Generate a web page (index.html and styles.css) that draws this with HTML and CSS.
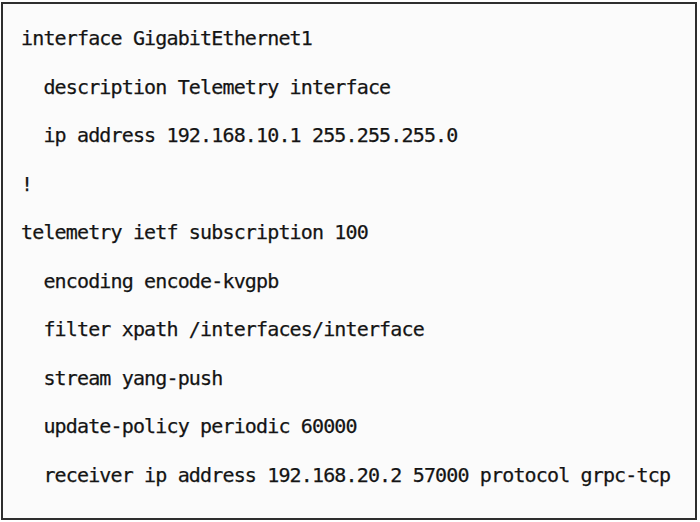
FILE: index.html
```html
<!DOCTYPE html>
<html>
<head>
<meta charset="utf-8">
<link rel="stylesheet" href="styles.css">
</head>
<body>
<div class="frame">
<pre class="code">interface GigabitEthernet1
  description Telemetry interface
  ip address 192.168.10.1 255.255.255.0
!
telemetry ietf subscription 100
  encoding encode-kvgpb
  filter xpath /interfaces/interface
  stream yang-push
  update-policy periodic 60000
  receiver ip address 192.168.20.2 57000 protocol grpc-tcp</pre>
</div>
</body>
</html>
```
FILE: styles.css
```css
html, body {
  margin: 0;
  padding: 0;
  background: #ffffff;
}
.frame {
  box-sizing: border-box;
  width: 696px;
  height: 518px;
  margin: 2px 0 0 1px;
  border: 2px solid #2e2e2e;
  background: #fbfbfb;
  padding: 10px 0 0 18px;
}
.code {
  margin: 0;
  font-family: "DejaVu Sans Mono", monospace;
  font-size: 20px;
  letter-spacing: -0.85px;
  line-height: 48.5px;
  color: #141414;
  -webkit-text-stroke: 0.25px #141414;
}
```
